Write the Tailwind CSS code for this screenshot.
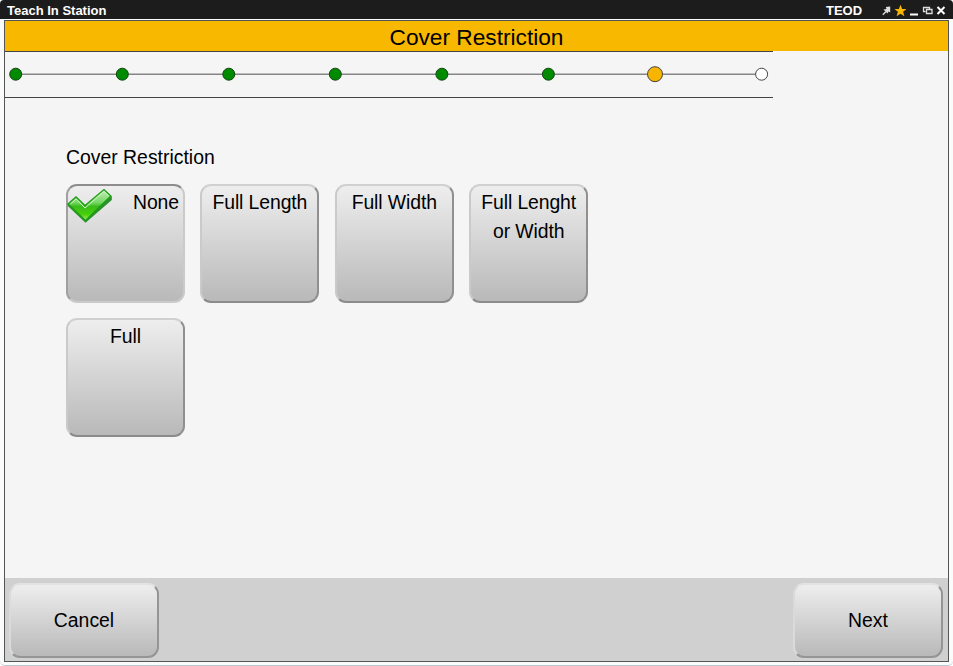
<!DOCTYPE html>
<html lang="en">
<head>
<meta charset="utf-8">
<title>Teach In Station</title>
<script src="https://cdn.jsdelivr.net/npm/@tailwindcss/browser@4"></script>
</head>
<body class="bg-white">
<div class="w-[953px] h-[666px] overflow-hidden flex flex-col bg-[#fafcfc] border-b border-[#bcc8d0] rounded-b-[5px] font-['Liberation_Sans',Arial,sans-serif] text-black">
  <header class="h-[19px] shrink-0 bg-[#1c1c1c] rounded-t-[4px] flex items-center justify-between pl-[7px] pr-[5px] pt-[3px] text-white font-bold text-[13px] leading-4">
    <span class="w-[110px] whitespace-nowrap">Teach In Station</span>
    <div class="flex items-center">
      <span class="w-[56px]">TEOD</span>
      <svg width="66" height="14" viewBox="0 0 66 14" fill="none">
        <path d="M3.800 3L8.200 2.500V8.500L6.500 7.500L5.500 9.500L1.500 5.500L4.500 5Z" fill="#ddd"/><path d="M.8 10.800L4 7.500" stroke="#ddd" stroke-width="1.300"/>
        <path d="M18.500 .8L20.200 5H24.500L21.100 7.800L22.400 12.300L18.500 9.700L14.600 12.300L15.900 7.800L12.500 5H16.800Z" fill="#f8b500"/>
        <path d="M28 10.500H36" stroke="#fff" stroke-width="2"/>
        <path d="M43.500 7.500H41.500V3.500H47.500V5.500M44.500 5.500H50V9.500H44.500Z" stroke="#ddd" stroke-width="1.300"/>
        <path d="M55.500 3L62.500 10M62.500 3L55.500 10" stroke="#fff" stroke-width="2"/>
      </svg>
    </div>
  </header>
  <main class="mt-px ml-[4px] w-[945px] h-[642px] shrink-0 border border-[#555] bg-[#f5f5f5] flex flex-col">
    <h1 class="h-[30px] shrink-0 bg-[#f8b800] text-center text-[22.700px] leading-[32px]">Cover Restriction</h1>
    <svg class="-mt-px h-[48px] w-[768px] shrink-0" viewBox="5 50 768 48" stroke="#444">
      <path d="M5 51.500H773M5 97.500H773" fill="none"/>
      <path d="M15 74.200H762" stroke="#858585" stroke-width="1.600"/>
      <g fill="#008a00" stroke="#134813" stroke-width="1">
        <circle cx="15.700" cy="74.200" r="6"/><circle cx="122.300" cy="74.200" r="6"/><circle cx="228.800" cy="74.200" r="6"/><circle cx="335.300" cy="74.200" r="6"/><circle cx="441.900" cy="74.200" r="6"/><circle cx="548.400" cy="74.200" r="6"/>
      </g>
      <circle cx="655" cy="74.200" r="7.500" fill="#f8b500"/>
      <circle cx="761.600" cy="74.200" r="6" fill="#fff"/>
    </svg>
    <section class="flex-1 pl-[61px] pt-[47px] text-[19.400px]">
      <h2 class="h-[39px] leading-[24px]">Cover Restriction</h2>
      <div class="grid grid-cols-4 w-max gap-x-[15.400px] gap-y-[15px] text-center text-[19.400px] tracking-[-0.1px] leading-[29px]">
        <button class="relative w-[119px] h-[119px] rounded-[11px] border-2 border-t-[#8d8d8d] border-l-[#a0a0a0] border-r-[#cacaca] border-b-[#cacaca] bg-linear-to-b from-[#eeeeee] to-[#b9b9b9] flex items-start justify-end pr-[4px] pt-[2px]">
          <svg class="absolute -left-px top-[2px]" width="47" height="36" viewBox="0 0 47 36">
            <defs><linearGradient id="check" x1="0" y1="0" x2="0" y2="1"><stop stop-color="#c4efbb"/><stop offset=".42" stop-color="#77d764"/><stop offset=".55" stop-color="#3abb1b"/><stop offset=".8" stop-color="#45cf08"/><stop offset="1" stop-color="#a6f06c"/></linearGradient></defs>
            <path d="M.8 16L9 9L18 17.500L37 1.500L44.800 8.500V12L18.500 34.800L.8 18Z" fill="#2a922b"/>
            <path d="M1 16L9 9L18 17.500L37 1.500L43.800 8L18.500 32.500L1 16Z" fill="url(#check)" stroke="#219c18" stroke-width="1.300"/>
            <path d="M3.500 16L9 11L18 20L37 3.500L41.800 8" fill="none" stroke="#c9f3bd" stroke-width="1"/>
          </svg>
          None</button>
        <button class="w-[119px] h-[119px] rounded-[11px] border-2 border-t-[#d0d0d0] border-l-[#cacaca] border-r-[#909090] border-b-[#8b8b8b] bg-linear-to-b from-[#eeeeee] to-[#b9b9b9] flex items-start justify-center pt-[2px]">Full Length</button>
        <button class="w-[119px] h-[119px] rounded-[11px] border-2 border-t-[#d0d0d0] border-l-[#cacaca] border-r-[#909090] border-b-[#8b8b8b] bg-linear-to-b from-[#eeeeee] to-[#b9b9b9] flex items-start justify-center pt-[2px]">Full Width</button>
        <button class="w-[119px] h-[119px] rounded-[11px] border-2 border-t-[#d0d0d0] border-l-[#cacaca] border-r-[#909090] border-b-[#8b8b8b] bg-linear-to-b from-[#eeeeee] to-[#b9b9b9] flex items-start justify-center pt-[2px]">Full Lenght<br>or Width</button>
        <button class="w-[119px] h-[119px] rounded-[11px] border-2 border-t-[#d0d0d0] border-l-[#cacaca] border-r-[#909090] border-b-[#8b8b8b] bg-linear-to-b from-[#eeeeee] to-[#b9b9b9] flex items-start justify-center pt-[2px]">Full</button>
      </div>
    </section>
    <footer class="h-[83px] shrink-0 bg-[#d0d0d0] flex justify-between items-start pt-[5px] pl-[4px] pr-[5px] text-[19.400px]">
      <button class="w-[150px] h-[75px] rounded-[11px] border-2 border-t-[#e2e2e2] border-l-[#dadada] border-r-[#959595] border-b-[#959595] bg-linear-to-b from-[#eeeeee] to-[#b9b9b9]">Cancel</button>
      <button class="w-[150px] h-[75px] rounded-[11px] border-2 border-t-[#e2e2e2] border-l-[#dadada] border-r-[#959595] border-b-[#959595] bg-linear-to-b from-[#eeeeee] to-[#b9b9b9]">Next</button>
    </footer>
  </main>
</div>
</body>
</html>
